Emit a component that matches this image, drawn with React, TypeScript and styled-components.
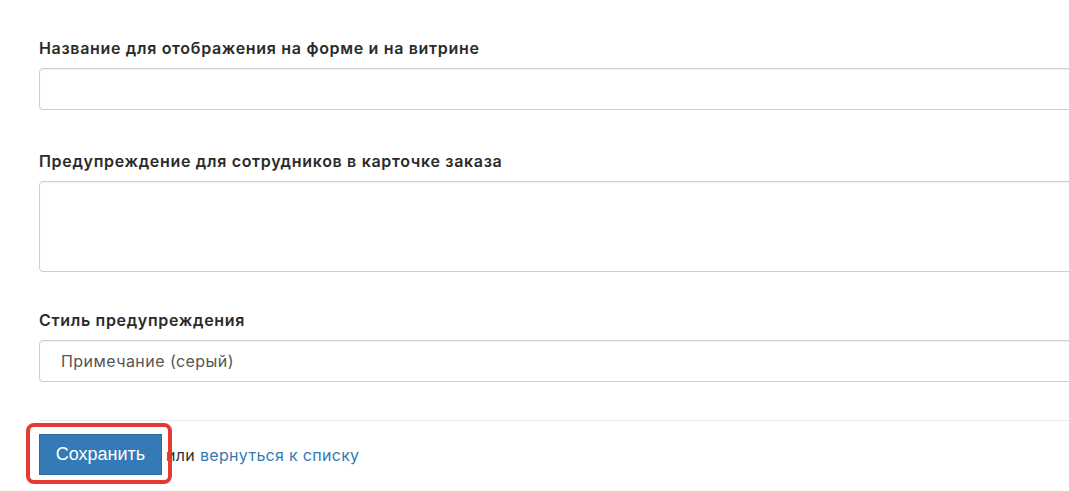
import React from "react";
import styled, { createGlobalStyle } from "styled-components";

const Global = createGlobalStyle`
  html { overflow: hidden; }
  html, body { margin: 0; padding: 0; background: #fff; }
  body { font-family: Inter, "Noto Sans", sans-serif; color: #333; }
  * { box-sizing: border-box; }
`;

const Page = styled.form`
  width: 1100px;
  padding: 38px 0 20px 39px;
  display: flex;
  flex-direction: column;
`;

const Field = styled.div<{ $gap: number }>`
  display: flex;
  flex-direction: column;
  margin-bottom: ${(p) => p.$gap}px;
`;

const Label = styled.label`
  font-family: Inter, "Noto Sans", sans-serif;
  font-weight: 600;
  font-size: 16px;
  letter-spacing: 0.68px;
  line-height: 20px;
  color: #2b2b2b;
  margin-bottom: 10px;
`;

const Input = styled.input`
  height: 42px;
  width: 100%;
  border: 1px solid #cfcfcf;
  border-radius: 4px;
  box-shadow: inset 0 1px 1px rgba(0, 0, 0, 0.06);
  padding: 0 21px;
  font-size: 16px;
  outline: none;
`;

const TextArea = styled.textarea`
  height: 91px;
  width: 100%;
  border: 1px solid #cfcfcf;
  border-radius: 4px;
  box-shadow: inset 0 1px 1px rgba(0, 0, 0, 0.06);
  resize: none;
  outline: none;
`;

const Select = styled.div`
  height: 42px;
  width: 100%;
  border: 1px solid #cfcfcf;
  border-radius: 4px;
  box-shadow: inset 0 1px 1px rgba(0, 0, 0, 0.06);
  display: flex;
  align-items: center;
  padding-left: 21px;
  font-family: Inter, "Noto Sans", sans-serif;
  font-size: 16px;
  letter-spacing: 0.45px;
  color: #555;
`;

const Actions = styled.div`
  border-top: 1px solid #eaeaea;
  padding-top: 13px;
  display: flex;
  align-items: center;
  font-size: 16px;
  letter-spacing: 0.3px;
`;

const ButtonFrame = styled.div`
  position: relative;
  display: flex;
`;

const Highlight = styled.span`
  position: absolute;
  left: -13px;
  top: -11px;
  width: 146px;
  height: 61px;
  border: 4px solid #e53935;
  border-radius: 8px;
  pointer-events: none;
`;

const SaveButton = styled.button`
  width: 123px;
  height: 41px;
  background: #337ab7;
  border: 1px solid #2e6da4;
  color: #fff;
  font-family: "Liberation Sans", Arial, sans-serif;
  font-size: 18px;
  letter-spacing: 0;
  padding: 0;
`;

const Or = styled.span`
  margin-left: 4px;
  color: #333;
`;

const Link = styled.a`
  color: #337ab7;
  text-decoration: none;
  margin-left: 5px;
`;

export default function App() {
  return (
    <>
      <Global />
      <Page>
        <Field $gap={41}>
          <Label>Название для отображения на форме и на витрине</Label>
          <Input />
        </Field>
        <Field $gap={38}>
          <Label>Предупреждение для сотрудников в карточке заказа</Label>
          <TextArea />
        </Field>
        <Field $gap={38}>
          <Label>Стиль предупреждения</Label>
          <Select>Примечание (серый)</Select>
        </Field>
        <Actions>
          <ButtonFrame>
            <SaveButton type="button">Сохранить</SaveButton>
            <Highlight />
          </ButtonFrame>
          <Or>или</Or>
          <Link href="#">вернуться к списку</Link>
        </Actions>
      </Page>
    </>
  );
}
